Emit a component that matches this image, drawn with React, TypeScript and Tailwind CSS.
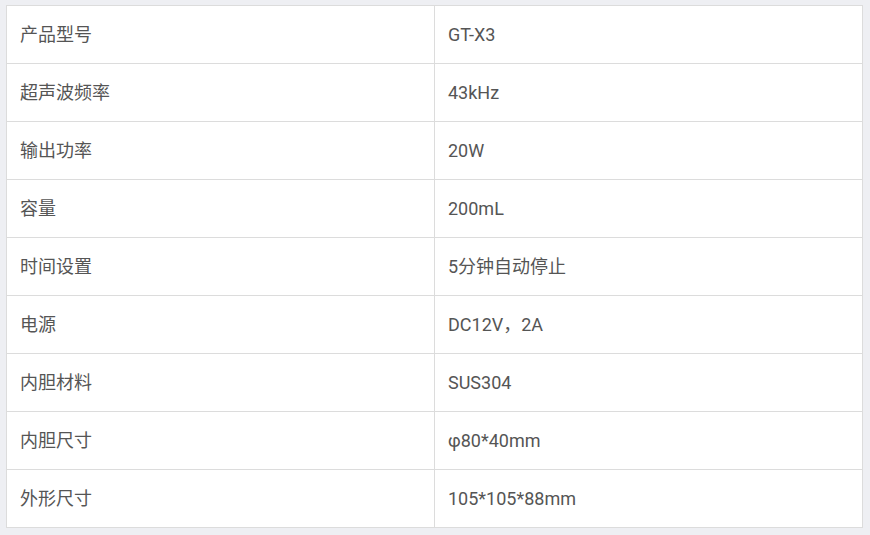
import React from "react";

const rows: [string, string][] = [
  ["产品型号", "GT-X3"],
  ["超声波频率", "43kHz"],
  ["输出功率", "20W"],
  ["容量", "200mL"],
  ["时间设置", "5分钟自动停止"],
  ["电源", "DC12V，2A"],
  ["内胆材料", "SUS304"],
  ["内胆尺寸", "φ80*40mm"],
  ["外形尺寸", "105*105*88mm"],
];

export default function App() {
  return (
    <div
      className="w-[870px] h-[535px] bg-[#eeeff3] pt-[5px] pl-[6px]"
      style={{ fontFamily: 'Roboto, "Noto Sans CJK SC", sans-serif' }}
    >
      <div className="w-[857px] bg-white border border-[#dcdcdc]">
        {rows.map(([k, v], i) => (
          <div
            key={k}
            className={
              i > 0
                ? "flex h-[58px] text-[18px] text-[#555555] border-t border-[#dcdcdc]"
                : "flex h-[57px] text-[18px] text-[#555555]"
            }
          >
            <div className="w-[428px] flex items-center pl-[13px] border-r border-[#dcdcdc]">{k}</div>
            <div className="flex-1 flex items-center pl-[13px]">{v}</div>
          </div>
        ))}
      </div>
    </div>
  );
}
